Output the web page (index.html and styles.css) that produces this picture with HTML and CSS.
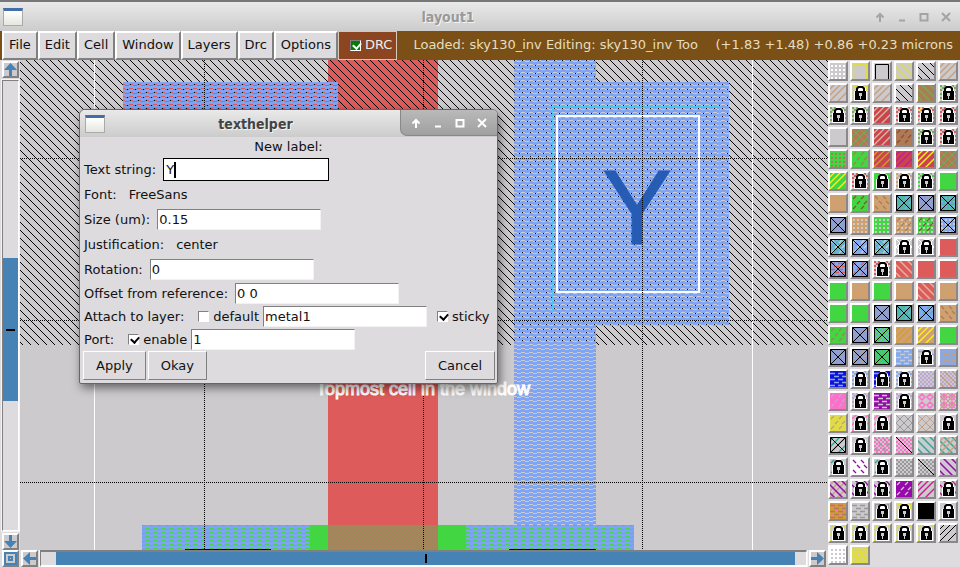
FILE: index.html
```html
<!DOCTYPE html>
<html lang="en">
<head>
<meta charset="utf-8">
<title>layout1</title>
<link rel="stylesheet" href="styles.css">
</head>
<body>
<header class="titlebar">
  <span class="app-icon"></span>
  <h1 class="title">layout1</h1>
  <div class="window-controls">
    <button aria-label="Shade"><svg viewBox="0 0 12 12"><path d="M6 11V3M2.500 6.500L6 3l3.500 3.500"/></svg></button>
    <button aria-label="Minimize"><svg viewBox="0 0 12 12"><path d="M3 9.500h6"/></svg></button>
    <button aria-label="Maximize"><svg viewBox="0 0 12 12"><path d="M2.500 3h7v6.500h-7z"/></svg></button>
    <button aria-label="Close"><svg viewBox="0 0 12 12"><path d="M2 2l8 8M10 2l-8 8"/></svg></button>
  </div>
</header>

<nav class="menubar">
  <button class="menu">File</button>
  <button class="menu">Edit</button>
  <button class="menu">Cell</button>
  <button class="menu">Window</button>
  <button class="menu">Layers</button>
  <button class="menu">Drc</button>
  <button class="menu">Options</button>
  <label class="drc"><input type="checkbox" class="check check-green" checked>DRC</label>
  <p class="status"><span>Loaded: sky130_inv Editing: sky130_inv Too</span><span>(+1.83 +1.48) +0.86 +0.23 microns</span></p>
</nav>

<main class="workspace">
  <div class="vscroll">
    <button class="arrow" aria-label="Scroll up"><svg viewBox="0 0 13 13"><path d="M6.500 0L13 7H8v6H5V7H0z"/></svg></button>
    <div class="track"><span class="gap-before"></span><span class="thumb"></span><span class="gap-after"></span></div>
    <button class="arrow" aria-label="Scroll down"><svg viewBox="0 0 13 13"><path d="M6.500 13L13 6H8V0H5v6H0z"/></svg></button>
  </div>

  <section class="canvas">
    <svg class="drawing" viewBox="20 60 808 490" preserveAspectRatio="xMinYMin slice">
      <defs>
        <pattern id="hatch" width="8" height="8" patternUnits="userSpaceOnUse">
          <path fill="#000" d="M0 2h1v1H0zM1 3h1v1H1zM2 4h1v1H2zM3 5h1v1H3zM4 6h1v1H4zM5 7h1v1H5zM6 0h1v1H6zM7 1h1v1H7z"/>
        </pattern>
        <pattern id="metal" width="8" height="4" patternUnits="userSpaceOnUse">
          <path fill="#7fa4f4" d="M0 2h8v2H0zM5 0h3v1H5zM0 0h1v1H0zM1 1h4v1H1z"/>
        </pattern>
        <pattern id="diffusion" width="4" height="4" patternUnits="userSpaceOnUse">
          <path fill="#ae7e5e" d="M0 0h4v4H0z"/>
          <path fill="#989058" d="M0 0h1v1H0zM1 1h1v1H1zM2 2h1v1H2zM3 3h1v1H3z"/>
        </pattern>
      </defs>
      <g shape-rendering="crispEdges">
        <path fill="#cccacc" d="M20 60h808v490H20z"/>
        <path fill="#de5b5b" d="M328 60h110v465H328zM123 82h215v50H123z"/>
        <path fill="url(#hatch)" d="M20 60h808v285H20z"/>
        <path fill="#42d742" d="M142 525h492v25H142z"/>
        <path fill="url(#metal)" d="M123 82h215v50H123zM514 60h82v22h133v244H596v199h-82zM142 525h168v25H142zM466 525h168v25H466z"/>
        <path fill="url(#diffusion)" d="M328 525h110v25H328z"/>
        <path fill="#35c2d5" d="M142 107h168v1H142z"/>
        <path fill="none" stroke="#4fc6ee" d="M552.500 106.500h167v205h-167z"/>
        <path fill="none" stroke="#fff" stroke-width="2" d="M557 116h142v176H557z"/>
        <path fill="#000" d="M185 549h86v1h-86zM509 549h87v1h-87z"/>
      </g>
      <text class="port-label" x="637" y="244">Y</text>
      <g class="grid">
        <path stroke="#fff" d="M94.500 60v490M752.500 60v490"/>
        <path stroke="#000" stroke-dasharray="1 1" d="M204.500 60v490M423.500 60v490M642.500 60v490M20 158.500h808M20 320.500h808M20 482.500h808"/>
      </g>
      <text class="cell-label" x="316" y="395">Topmost cell in the window</text>
    </svg>

    <form class="dialog">
      <div class="dialog-title">
        <span class="app-icon"></span>
        <h2 class="title">texthelper</h2>
        <div class="window-controls">
          <button type="button" aria-label="Shade"><svg viewBox="0 0 12 12"><path d="M6 11V3M2.500 6.500L6 3l3.500 3.500"/></svg></button>
          <button type="button" aria-label="Minimize"><svg viewBox="0 0 12 12"><path d="M3 9.500h6"/></svg></button>
          <button type="button" aria-label="Maximize"><svg viewBox="0 0 12 12"><path d="M2.500 3h7v6.500h-7z"/></svg></button>
          <button type="button" aria-label="Close"><svg viewBox="0 0 12 12"><path d="M2 2l8 8M10 2l-8 8"/></svg></button>
        </div>
      </div>
      <p class="dialog-heading">New label:</p>
      <div class="row"><label for="string">Text string:</label><input class="entry focused" id="string" value="Y"><span class="caret"></span></div>
      <div class="row"><span>Font:</span><button type="button" class="choice">FreeSans</button></div>
      <div class="row"><label for="size">Size (um):</label><input class="entry" id="size" value="0.15"></div>
      <div class="row"><span>Justification:</span><button type="button" class="choice">center</button></div>
      <div class="row"><label for="rotation">Rotation:</label><input class="entry" id="rotation" value="0"></div>
      <div class="row tight"><label for="offset">Offset from reference:</label><input class="entry" id="offset" value="0 0"></div>
      <div class="row tight"><label for="layer">Attach to layer:</label><label class="option"><input type="checkbox" class="check">default</label><input class="entry flush" id="layer" value="metal1"><label class="option"><input type="checkbox" class="check" checked>sticky</label></div>
      <div class="row tight"><label for="port">Port:</label><label class="option"><input type="checkbox" class="check" checked>enable</label><input class="entry flush" id="port" value="1"></div>
      <div class="actions"><button type="button">Apply</button><button type="button">Okay</button><button type="button" class="cancel">Cancel</button></div>
    </form>
  </section>

  <aside class="palette" id="palette" aria-label="Layers"></aside>

  <div class="hscroll">
    <button class="arrow" aria-label="Zoom"><svg viewBox="0 0 13 13"><path fill-rule="evenodd" d="M0 0h13v13H0zM2 2v9h9V2zM4 4h5v5H4zM6 6v1h1V6z"/></svg></button>
    <button class="arrow" aria-label="Scroll left"><svg viewBox="0 0 13 13"><path d="M0 6.500L7 0v5h6v3H7v5z"/></svg></button>
    <div class="track"><span class="gap-before"></span><span class="thumb"></span><span class="gap-after"></span></div>
    <button class="arrow" aria-label="Scroll right"><svg viewBox="0 0 13 13"><path d="M13 6.500L6 0v5H0v3h6v5z"/></svg></button>
  </div>
</main>
<script src="palette.js"></script>
</body>
</html>
```
FILE: styles.css
```css
* {
  box-sizing: border-box;
}

body {
  margin: 0;
  height: 100vh;
  display: flex;
  flex-direction: column;
  overflow: hidden;
  background: #dddbde;
  color: #111;
  font: 13px/20px "DejaVu Sans", sans-serif;
}

button,
input {
  font: inherit;
  color: inherit;
  margin: 0;
  padding: 0;
  border-radius: 0;
}

h1,
h2,
p {
  margin: 0;
}

svg {
  display: block;
}

.titlebar,
.dialog-title {
  display: flex;
  align-items: center;
  background: linear-gradient(#e9e9e9, #cccccc);
}

.titlebar {
  flex: none;
  height: 31px;
  padding: 0 7px 0 3px;
  border-top: 2px solid #777;
  color: #999;
}

.app-icon {
  width: 20px;
  height: 18px;
  border: 1px solid #aaa;
  border-top: 3px solid #456da5;
  background: linear-gradient(#fff, #e6e6df);
}

.title {
  flex: 1;
  text-align: center;
  font: bold 14px/20px "DejaVu Sans Condensed", "DejaVu Sans", sans-serif;
  text-shadow: 1px 1px #f4f4f4;
}

.window-controls {
  display: flex;
  gap: 8px;
}

.window-controls button {
  width: 14px;
  height: 14px;
  border: 0;
  background: none;
  color: #a4a4a4;
}

.window-controls svg {
  width: 12px;
  margin: auto;
  fill: none;
  stroke: currentColor;
  stroke-width: 2;
}

.menubar {
  flex: none;
  display: flex;
  height: 29px;
  padding-left: 2px;
  background: #7b5016;
}

.menu {
  padding: 0 5px 1px;
  border: 2px solid;
  border-color: #fff #808080 #808080 #fff;
  background: #dddbde;
  white-space: nowrap;
}

.drc {
  display: flex;
  align-items: center;
  gap: 4px;
  padding: 0 4px 1px 11px;
  border: 1px solid #d9c8b8;
  background: #8b4520;
  color: #eee;
}

.status {
  flex: 1;
  display: flex;
  justify-content: space-between;
  align-items: center;
  padding: 0 7px 1px 16px;
  color: #e3dfc2;
  white-space: nowrap;
}

.check {
  appearance: none;
  position: relative;
  width: 11px;
  height: 11px;
  border: 1px solid;
  border-color: #808080 #fff #fff #808080;
  background: #fff;
}

.check:checked::after {
  content: "";
  position: absolute;
  left: 2px;
  top: 1px;
  width: 6px;
  height: 4px;
  border: solid #000;
  border-width: 0 0 2px 2px;
  rotate: -48deg;
}

.check-green:checked {
  background: #087a08;
}

.check-green:checked::after {
  border-color: #fff;
}

.workspace {
  flex: 1;
  min-height: 0;
  display: grid;
  grid-template: minmax(0, 1fr) 17px / 20px minmax(0, 1fr) 132px;
}

.canvas {
  position: relative;
  overflow: hidden;
}

.drawing {
  width: 100%;
  height: 100%;
}

.grid {
  fill: none;
  shape-rendering: crispEdges;
}

.port-label {
  font: 105px "Liberation Sans", sans-serif;
  fill: #275cb4;
  stroke: #275cb4;
  text-anchor: middle;
}

.cell-label {
  font: 18px "Liberation Sans", sans-serif;
  fill: #fff;
  stroke: #fff;
  stroke-width: 1;
}

.vscroll,
.hscroll {
  display: flex;
  gap: 2px;
}

.vscroll {
  flex-direction: column;
  padding: 1px 1px 0 2px;
}

.hscroll {
  grid-column: 1 / 3;
  padding-left: 2px;
  padding-right: 2px;
}

.arrow {
  flex: none;
  width: 17px;
  height: 17px;
  border: 2px solid;
  border-color: #fff #808080 #808080 #fff;
  background: #cccacc;
}

.arrow svg {
  fill: #4682b4;
}

.track {
  flex: 1;
  display: flex;
  border: 1px solid;
  border-color: #808080 #fff #fff #808080;
  outline: 1px solid #f4f4f4;
}

.vscroll .track {
  flex-direction: column;
}

.thumb {
  background: #4682b4;
  display: grid;
  place-items: center;
}

.thumb::after {
  content: "";
  background: #000;
}

.vscroll .gap-before {
  flex: 177;
}

.vscroll .thumb {
  flex: 143;
}

.vscroll .gap-after {
  flex: 129;
}

.vscroll .thumb::after {
  width: 9px;
  height: 2px;
}

.hscroll .track {
  border-width: 2px 1px;
}

.hscroll .gap-before {
  flex: 15;
}

.hscroll .thumb {
  flex: 739;
}

.hscroll .gap-after {
  flex: 11;
}

.hscroll .thumb::after {
  width: 2px;
  height: 9px;
}

.palette {
  grid-area: 1 / 3 / 3 / 4;
  display: grid;
  grid-template-columns: repeat(6, 20px);
  grid-auto-rows: 20px;
  gap: 2px;
  padding-top: 1px;
}

.swatch {
  border: 2px solid;
  border-color: #fff #8a888a #8a888a #fff;
  background: #cccacc;
}

.swatch svg {
  width: 16px;
  height: 16px;
  fill: none;
}

.dialog {
  position: absolute;
  left: 59px;
  top: 49px;
  width: 419px;
  padding-bottom: 3px;
  border: 1px solid #666;
  border-radius: 6px 6px 2px 2px;
  background: #dddbde;
  box-shadow: 2px 4px 10px rgb(0 0 0 / 50%);
}

.dialog-title {
  height: 27px;
  padding-left: 5px;
  border-radius: 5px 5px 0 0;
  color: #444;
}

.dialog-title .title {
  padding-left: 6px;
}

.dialog-title .window-controls {
  align-self: stretch;
  align-items: center;
  padding: 0 8px;
  margin-bottom: 1px;
  border: 1px solid #888;
  border-width: 0 0 1px 1px;
  border-radius: 0 5px 0 7px;
  background: linear-gradient(#b9b9b9, #a0a0a0);
}

.dialog-title .window-controls button {
  color: #fff;
}

.dialog-heading {
  text-align: center;
}

.row {
  display: flex;
  align-items: center;
  height: 25px;
  padding-left: 4px;
  white-space: nowrap;
}

.tight {
  height: 23px;
}

.entry {
  width: 164px;
  height: 21px;
  margin-left: 7px;
  padding: 0 1px;
  border: 1px solid;
  border-color: #808080 #f2f2f2 #f2f2f2 #808080;
  background: #fff;
}

.focused {
  width: 166px;
  height: 23px;
  border: 1px solid #000;
  padding-left: 2px;
}

.caret {
  width: 2px;
  height: 16px;
  margin-left: -155px;
  background: #000;
}

.flush {
  margin-left: 4px;
}

.choice {
  margin-left: 12px;
  border: 0;
  background: none;
}

.option {
  display: flex;
  align-items: center;
  gap: 4px;
  margin-left: 14px;
}

.entry + .option {
  margin-left: 10px;
}

.actions {
  display: flex;
  gap: 2px;
  padding: 0 2px 0 3px;
}

.actions button {
  height: 29px;
  padding: 0 12px;
  border: 1px solid;
  border-color: #fff #808080 #808080 #fff;
  background: #dddbde;
}

.actions .cancel {
  margin-left: auto;
}
```
FILE: palette.js
```js
// Line and stipple shapes on a 16 x 16 swatch.
const shapes = {
  back: "M-4 8L8 20M-4 0L16 20M0 -4L20 16M8 -4L20 8",
  fwd: "M-4 8L8 -4M-4 20L20 -4M4 20L20 4M-4 14L14 -4",
  one: "M0 0L16 16",
  dash: "M1 4l3-3M9 4l3-3M5 9l3-3M12 9l3-3M1 14l3-3M9 14l3-3",
  bdash: "M1 1l3 3M9 1l3 3M5 6l3 3M12 6l3 3M1 11l3 3M9 11l3 3",
  dots: "M1 3h2m2 0h2m2 0h2m2 0h2M1 7h2m2 0h2m2 0h2m2 0h2M1 11h2m2 0h2m2 0h2m2 0h2M1 15h2m2 0h2m2 0h2m2 0h2",
  wave: "M0 2.500h5m3 0h5M4 5.500h5m3 0h4M0 8.500h5m3 0h5M4 11.500h5m3 0h4M0 14.500h5m3 0h5",
  open: "M1.500 16V1.500h13V16",
  cross: "M.5 .5h15v15H.5zL15.500 15.500M15.500 .5L.5 15.500",
  hatch: "M0 8L8 0M0 16L16 0M8 16l8-8M0 8l8 8M0 0l16 16M8 0l8 8",
  rings: "M1 4l3-3 3 3-3 3zM9 4l3-3 3 3-3 3zM1 12l3-3 3 3-3 3zM9 12l3-3 3 3-3 3z",
  check: Array.from({ length: 8 }, (_, y) => `M${(y % 2) * 2} ${y * 2 + 1}` + "h2m2 0".repeat(4)).join("")
};

const widths = { dots: 2, check: 2, open: 1.5, back: 1.5, fwd: 1.4, rings: 1.5, wave: 1.5, dash: 1.4, bdash: 1.4 };

const colours = {
  k: "#000", w: "#fff", g: "#42d742", t: "#cfa171", r: "#de5b5b", R: "#c84550",
  b: "#82aaee", B: "#8fa0d0", n: "#1010dd", c: "#50b8a8", y: "#dfdc45", Y: "#ffee22",
  o: "#d39b30", p: "#9908ad", P: "#bca6d6", m: "#c51c92", i: "#ff6fc8", a: "#999",
  N: "#ad7b55", d: "#954b35", l: "#e0b49c", G: "#70ae50", x: "#cccacc", T: "#c5a080", C: "#30a69b"
};

const lock = `<path fill="#fff" d="M4 6V3l2-2V0h5l3 3v3h1v10H2V6z"/>
  <path fill="#000" fill-rule="evenodd" d="M4 6V3l2-2h5l2 2v3h1v9H3V6zM6 6h5V4l-1-1H7L6 4z"/>
  <path fill="#ccc" d="M7 8h3v3H9v3H8v-3H7z"/>`;

// One entry per layer: base colour, then colour:shape overlays; "lock" marks a locked layer.
const rows = [
  "x w:dots|x y:open|x k:open|x y:back|x k:back|x T:fwd",
  "x T:fwd|x y:open lock|x T:fwd|x k:back|N G:back|x G:check lock",
  "x G:check lock|x G:check lock|R l:fwd|x r:check lock|x r:check Y:dash lock|x r:check lock",
  "x|N G:hatch|R l:fwd|N d:dash|x G:check lock|x r:check lock",
  "g N:dots|g N:dash|R o:fwd|R m:fwd|R Y:fwd|N G:hatch",
  "g Y:fwd|x r:check lock|g lock|x t:check lock|x g:check lock|g",
  "t|g d:dash|t N:bdash|c b:dash k:cross|B k:cross|c b:dots k:cross",
  "B k:cross|t x:dots|g x:dots|t x:dots N:dash|g x:dots d:dash|b x:dots k:cross",
  "b c:check x:dash k:cross|b x:dash k:cross|b c:check x:dash k:cross|x w:hatch lock|x w:hatch lock|r",
  "b r:wave k:cross|b r:dash k:cross|x r:check lock|r l:back|r|r",
  "g|t|g|t|r l:back|t",
  "g|g|B k:cross|c b:dash k:cross|b c:dash k:cross|t N:bdash",
  "g N:dash|B k:cross|b g:check k:cross|t o:fwd|t Y:fwd|g",
  "B k:cross|B t:dash k:cross|c g:check k:cross|b x:wave|x b:wave lock|b T:wave",
  "n b:wave|x b:check lock|n b:wave lock|x b:check lock|x P:check|x P:check T:back",
  "i P:dash|x P:check lock|p x:wave|x P:check lock|x i:rings|x i:rings T:hatch",
  "y T:dash|x i:fwd lock|x i:fwd lock|x a:hatch|x T:hatch|x lock",
  "x C:fwd k:cross|x lock|x i:check a:bdash|x i:check k:one|x C:back|x C:back T:fwd",
  "x C:dash lock|w p:bdash|x C:dash lock|x a:check|x a:check k:one|x p:back",
  "x T:fwd p:back|x p:back lock|x p:back lock|p x:dash|x m:fwd|x m:back lock",
  "o i:dash N:wave|x a:wave|x a:open lock|x y:open lock|k|x lock",
  "x y:fwd lock|x y:fwd lock|x y:fwd lock|x y:fwd lock|x y:fwd lock|x k:fwd",
  "w x:dots|y x:bdash"
];

document.getElementById("palette").innerHTML = rows
  .flatMap(row => row.split("|"))
  .map((entry, index) => {
    const [base, ...overlays] = entry.split(" ");
    const art = overlays.map(item => {
      if (item === "lock") return lock;
      const [colour, shape] = item.split(":");
      const width = colour === "k" ? 1 : widths[shape] || 1;
      return `<path stroke="${colours[colour]}" stroke-width="${width}" d="${shapes[shape]}"/>`;
    }).join("");
    return `<button class="swatch" aria-label="Layer ${index + 1}"><svg viewBox="0 0 16 16"><path fill="${colours[base]}" d="M0 0h16v16H0z"/>${art}</svg></button>`;
  })
  .join("");
```
